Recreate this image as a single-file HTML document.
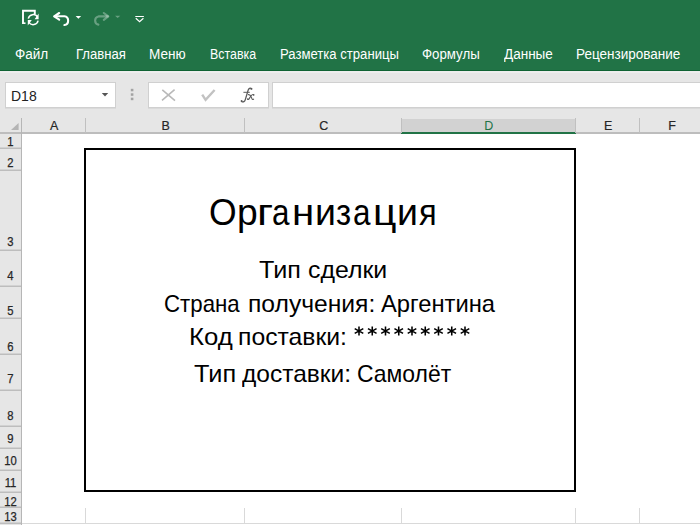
<!DOCTYPE html>
<html><head><meta charset="utf-8">
<style>
*{margin:0;padding:0;box-sizing:border-box}
html,body{width:700px;height:525px;overflow:hidden;background:#fff;font-family:"Liberation Sans",sans-serif}
.a{position:absolute;white-space:nowrap}
#top{position:absolute;left:0;top:0;width:700px;height:71px;background:#217346}
.tab{position:absolute;top:46.4px;color:#fff;font-size:14px;line-height:16px;transform-origin:0 0;white-space:nowrap}
#fbar{position:absolute;left:0;top:71px;width:700px;height:48px;background:#e6e6e6}
.box{position:absolute;background:#fff;border:1px solid #d0d0d0;box-shadow:0 1px 0 #dadada}
#hdr{position:absolute;left:0;top:119px;width:700px;height:15px;background:#e6e6e6}
#rowh{position:absolute;left:0;top:134px;width:21px;height:391px;background:#e6e6e6}
.ch{position:absolute;top:120px;font-size:12.5px;color:#262626;text-align:center;line-height:13px;transform:translateX(0.7px);-webkit-text-stroke:0.2px currentColor}
.rn{position:absolute;left:0;width:21px;font-size:12.5px;color:#262626;text-align:center;line-height:13px;transform:scaleX(0.9);-webkit-text-stroke:0.25px #262626}
.cl{position:absolute;top:118px;width:1px;height:15px;background:#c0c0c0}
.rl{position:absolute;left:0;width:21px;height:2px;margin-top:-1px;background:linear-gradient(#d2d2d2 50%,#bdbdbd 50%)}
.t{position:absolute;color:#000;white-space:nowrap;transform-origin:0 0}
</style></head><body>
<div id="top">
 <!-- QAT icons -->
 <svg class="a" style="left:0;top:0" width="160" height="35" viewBox="0 0 160 35">
  <g fill="none" stroke="#fff">
   <path d="M23 24V10.8h11.8V14" stroke-width="1.9"/>
   <path d="M22.5 23.2h3" stroke-width="1.6"/>
   <path d="M28.3 18.6A5 5 0 0 1 37.6 17.2" stroke-width="1.5"/>
   <path d="M38.1 20.6A5 5 0 0 1 28.8 22" stroke-width="1.5"/>
  </g>
  <path d="M38.6 13.6V19.2H34.6z M27.8 25.6V20H31.8z" fill="#fff"/>
  <g fill="none" stroke="#fff" stroke-width="2.1" stroke-linecap="round" stroke-linejoin="round">
   <path d="M59.2 13L54.2 16.3L59.2 19.6"/>
   <path d="M54.6 16.3H64.4A4.4 4.4 0 0 1 64.4 25"/>
  </g>
  <path d="M75.6 15.9h5.6l-2.8 2.9z" fill="#fff"/>
  <g fill="none" stroke="#fff" stroke-opacity="0.32" stroke-width="2.1" stroke-linecap="round" stroke-linejoin="round">
   <path d="M103.8 13L108.3 16.4L103.8 19.8"/>
   <path d="M107.8 16.4H98.4A4.2 4.2 0 0 0 98.4 24.6"/>
  </g>
  <path d="M115 15.8h5.3l-2.65 2.1z" fill="#fff" fill-opacity="0.32"/>
  <path d="M135.3 16.5h8.6" stroke="#fff" stroke-width="1"/>
  <path d="M135.8 18.3L139.6 21.8L143.4 18.3" fill="none" stroke="#fff" stroke-width="1.2"/>
 </svg>
 <div class="tab" style="left:15.1px;transform:scaleX(0.965)">Файл</div>
 <div class="tab" style="left:76.3px;transform:scaleX(0.935)">Главная</div>
 <div class="tab" style="left:149.0px;transform:scaleX(0.969)">Меню</div>
 <div class="tab" style="left:210.0px;transform:scaleX(0.886)">Вставка</div>
 <div class="tab" style="left:280.3px;transform:scaleX(0.936)">Разметка страницы</div>
 <div class="tab" style="left:422.4px;transform:scaleX(0.947)">Формулы</div>
 <div class="tab" style="left:504.3px;transform:scaleX(0.966)">Данные</div>
 <div class="tab" style="left:576.3px;transform:scaleX(0.964)">Рецензирование</div>
</div>
<div id="fbar">
 <div class="box" style="left:5px;top:11px;width:111px;height:26px"></div>
 <div class="a" style="left:11px;top:17px;font-size:14px;color:#222;line-height:16px">D18</div>
 <svg class="a" style="left:100px;top:20px" width="12" height="8"><path d="M1.8 1.9h6.4l-3.2 3.6z" fill="#555"/></svg>
 <svg class="a" style="left:129px;top:17px" width="6" height="16"><g fill="#a3a3a3"><rect x="1.8" y="0.8" width="2.6" height="2.5"/><rect x="1.8" y="5.3" width="2.6" height="2.5"/><rect x="1.8" y="9.7" width="2.6" height="2.5"/></g></svg>
 <div class="box" style="left:148px;top:11px;width:121px;height:26px"></div>
 <svg class="a" style="left:148px;top:11px" width="121" height="26">
  <path d="M14.3 7.8L27 18.6M26.6 7.6L14 18.4" stroke="#b9b9b9" stroke-width="1.6" fill="none"/>
  <path d="M54.2 12.6L57.6 17.8L66.6 8" stroke="#c2c2c2" stroke-width="2.4" fill="none"/>
 </svg>
 <svg class="a" style="left:0;top:-71px" width="700" height="130"><g fill="none" stroke="#5a5a5a" stroke-linecap="round">
  <path d="M251.6 88.6C250.2 87.6 248.6 88.3 248 90.6L245.4 99.4C244.8 101.6 243.2 102.6 241.6 101.4" stroke-width="1.3"/>
  <path d="M243.8 92.3H249.4" stroke-width="1"/>
  <path d="M248.4 94.6C249.8 94.4 250.6 95.4 251.2 97L252 98.8C252.4 99.6 253 99.8 253.6 99.2" stroke-width="1.1"/>
  <path d="M253.8 94.8C253 94.2 252 94.6 251 95.8L249.2 98.6C248.6 99.6 248 99.6 247.6 99" stroke-width="1.1"/>
 </g><g fill="#5a5a5a"><circle cx="251.4" cy="88.9" r="0.95"/><circle cx="241.6" cy="100.9" r="0.95"/><circle cx="253.6" cy="94.9" r="0.75"/><circle cx="247.8" cy="99.3" r="0.75"/></g></svg>
 <div class="box" style="left:272px;top:11px;width:440px;height:26px"></div>
</div>
<div class="a" style="left:0;top:70px;width:700px;height:1px;background:#0f6233"></div>
<div class="a" style="left:0;top:71px;width:700px;height:2px;background:#ededed"></div>
<div id="hdr"></div>
<div id="rowh"></div>
<!-- header bottom line -->
<div class="a" style="left:0;top:132px;width:700px;height:2px;background:#bdbdbd"></div>
<div class="a" style="left:21px;top:118px;width:1px;height:407px;background:#b6b6b6"></div>
<!-- select-all triangle -->
<svg class="a" style="left:0;top:119px" width="21" height="14"><path d="M18.6 4v7H11z" fill="#b4b4b4"/></svg>
<!-- D highlight -->
<div class="a" style="left:401px;top:119px;width:175px;height:13px;background:#d2d2d2"></div>
<div class="a" style="left:401px;top:132px;width:175px;height:2px;background:#217346"></div>
<!-- column separators -->
<div class="cl" style="left:85px"></div>
<div class="cl" style="left:244px"></div>
<div class="cl" style="left:401px"></div>
<div class="cl" style="left:575px"></div>
<div class="cl" style="left:639px"></div>
<div class="ch" style="left:22px;width:63px">A</div>
<div class="ch" style="left:86px;width:158px">B</div>
<div class="ch" style="left:245px;width:156px">C</div>
<div class="ch" style="left:401.5px;width:173px;color:#217346;-webkit-text-stroke:0">D</div>
<div class="ch" style="left:576px;width:63px">E</div>
<div class="ch" style="left:640px;width:63px">F</div>
<!-- row separators -->
<div class="rl" style="top:148px"></div>
<div class="rl" style="top:170px"></div>
<div class="rl" style="top:250px"></div>
<div class="rl" style="top:286px"></div>
<div class="rl" style="top:318px"></div>
<div class="rl" style="top:354px"></div>
<div class="rl" style="top:390px"></div>
<div class="rl" style="top:426px"></div>
<div class="rl" style="top:448px"></div>
<div class="rl" style="top:470px"></div>
<div class="rl" style="top:492px"></div>
<div class="rl" style="top:507px"></div>
<div class="rl" style="top:523px"></div>
<div class="rn" style="top:136px">1</div>
<div class="rn" style="top:157px">2</div>
<div class="rn" style="top:236px">3</div>
<div class="rn" style="top:270px">4</div>
<div class="rn" style="top:305px">5</div>
<div class="rn" style="top:341px">6</div>
<div class="rn" style="top:373px">7</div>
<div class="rn" style="top:410px">8</div>
<div class="rn" style="top:433px">9</div>
<div class="rn" style="top:455px">10</div>
<div class="rn" style="top:477px">11</div>
<div class="rn" style="top:496px">12</div>
<div class="rn" style="top:511px">13</div>
<!-- row 13 gridlines -->
<div class="a" style="left:85px;top:508px;width:1px;height:15px;background:#d9d9d9"></div>
<div class="a" style="left:244px;top:508px;width:1px;height:15px;background:#d9d9d9"></div>
<div class="a" style="left:401px;top:508px;width:1px;height:15px;background:#d9d9d9"></div>
<div class="a" style="left:575px;top:508px;width:1px;height:15px;background:#d9d9d9"></div>
<div class="a" style="left:639px;top:508px;width:1px;height:15px;background:#d9d9d9"></div>
<div class="a" style="left:22px;top:523px;width:678px;height:1px;background:#d9d9d9"></div>
<!-- border box -->
<div class="a" style="left:84px;top:148px;width:492px;height:344px;border:2px solid #000"></div>
<!-- texts -->
<div class="t" style="left:209.08px;top:192px;font-size:37px;transform:scaleX(0.960)">О</div>
<div class="t" style="left:237.29px;top:192px;font-size:37px;transform:scaleX(1.006)">р</div>
<div class="t" style="left:256.90px;top:192px;font-size:37px;transform:scaleX(1.200)">г</div>
<div class="t" style="left:272.38px;top:192px;font-size:37px;transform:scaleX(0.850)">а</div>
<div class="t" style="left:291.74px;top:192px;font-size:37px;transform:scaleX(1.087)">н</div>
<div class="t" style="left:314.66px;top:192px;font-size:37px;transform:scaleX(1.013)">и</div>
<div class="t" style="left:336.41px;top:192px;font-size:37px;transform:scaleX(0.893)">з</div>
<div class="t" style="left:353.02px;top:192px;font-size:37px;transform:scaleX(0.850)">а</div>
<div class="t" style="left:373.28px;top:192px;font-size:37px;transform:scaleX(1.106)">ц</div>
<div class="t" style="left:396.76px;top:192px;font-size:37px;transform:scaleX(1.013)">и</div>
<div class="t" style="left:418.62px;top:192px;font-size:37px;transform:scaleX(0.882)">я</div>
<div class="t" style="left:259.45px;top:256px;font-size:24px;transform:scaleX(1.0486)">Тип</div>
<div class="t" style="left:307.66px;top:256px;font-size:24px;transform:scaleX(1.0365)">сделки</div>
<div class="t" style="left:164.37px;top:290px;font-size:24px;transform:scaleX(0.9272)">Страна</div>
<div class="t" style="left:247.85px;top:290px;font-size:24px;transform:scaleX(1.0267)">получения:</div>
<div class="t" style="left:381.30px;top:290px;font-size:24px;transform:scaleX(0.9896)">Аргентина</div>
<div class="t" style="left:188.86px;top:323px;font-size:24px;transform:scaleX(1.0711)">Код</div>
<div class="t" style="left:237.84px;top:323px;font-size:24px;transform:scaleX(1.0304)">поставки:</div>
<div class="t" style="left:193.65px;top:360px;font-size:24px;transform:scaleX(1.0541)">Тип</div>
<div class="t" style="left:241.90px;top:360px;font-size:24px;transform:scaleX(1.0210)">доставки:</div>
<div class="t" style="left:356.75px;top:360px;font-size:24px;transform:scaleX(0.9546)">Самолёт</div>
<svg class="a" style="left:0;top:0" width="700" height="525"><g stroke="#000" stroke-width="1.55" fill="none"><g transform="translate(359.00 331)"><path d="M0-4.6V4.6M-4.3-2.4L4.3 2.4M-4.3 2.4L4.3-2.4"/></g><g transform="translate(372.25 331)"><path d="M0-4.6V4.6M-4.3-2.4L4.3 2.4M-4.3 2.4L4.3-2.4"/></g><g transform="translate(385.50 331)"><path d="M0-4.6V4.6M-4.3-2.4L4.3 2.4M-4.3 2.4L4.3-2.4"/></g><g transform="translate(398.75 331)"><path d="M0-4.6V4.6M-4.3-2.4L4.3 2.4M-4.3 2.4L4.3-2.4"/></g><g transform="translate(412.00 331)"><path d="M0-4.6V4.6M-4.3-2.4L4.3 2.4M-4.3 2.4L4.3-2.4"/></g><g transform="translate(425.25 331)"><path d="M0-4.6V4.6M-4.3-2.4L4.3 2.4M-4.3 2.4L4.3-2.4"/></g><g transform="translate(438.50 331)"><path d="M0-4.6V4.6M-4.3-2.4L4.3 2.4M-4.3 2.4L4.3-2.4"/></g><g transform="translate(451.75 331)"><path d="M0-4.6V4.6M-4.3-2.4L4.3 2.4M-4.3 2.4L4.3-2.4"/></g><g transform="translate(465.00 331)"><path d="M0-4.6V4.6M-4.3-2.4L4.3 2.4M-4.3 2.4L4.3-2.4"/></g></g></svg>
</body></html>
